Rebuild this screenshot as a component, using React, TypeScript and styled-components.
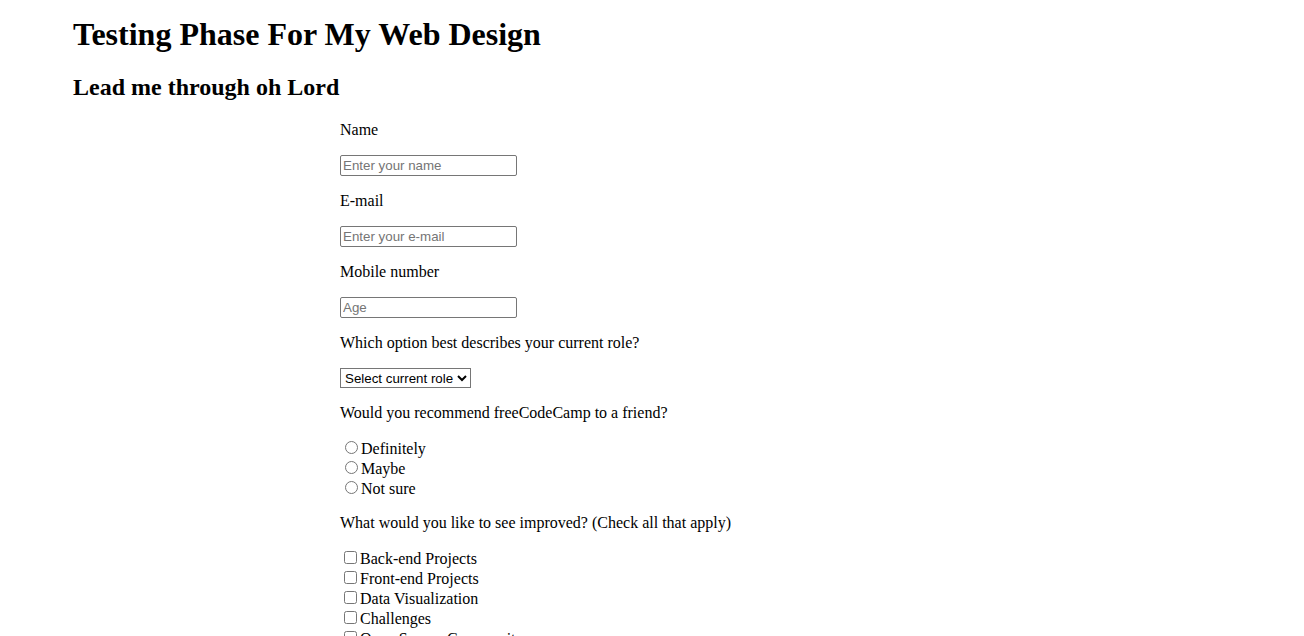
import React from "react";
import styled, { createGlobalStyle } from "styled-components";

const Global = createGlobalStyle`
  html, body { margin: 0; padding: 0; background: #fff; }
  body { font-family: "Liberation Serif", "Times New Roman", serif; color: #000; }
`;

const Page = styled.div`
  padding: 16px 0 0 73px;
`;

const Title = styled.h1`
  font-size: 32px;
  font-weight: bold;
  margin: 0 0 21.44px;
`;

const Subtitle = styled.h2`
  font-size: 24px;
  font-weight: bold;
  margin: 19.92px 0;
`;

const Form = styled.form`
  margin-left: 267px;
`;

const Question = styled.p`
  font-size: 16px;
  margin: 16px 0;
`;

const Field = styled.p`
  margin: 16px 0;
  line-height: 0;
`;

const TextInput = styled.input`
  font-family: "Liberation Sans", Arial, sans-serif;
  font-size: 13.333px;
  width: 177px;
  height: 21px;
  box-sizing: border-box;
  padding: 1px 2px;
  border: 1px solid #767676;
  border-radius: 2px;
  &::placeholder { color: #757575; }
`;

const Select = styled.select`
  font-family: "Liberation Sans", Arial, sans-serif;
  font-size: 13.333px;
  color: #000;
  height: 20px;
  border: 1px solid #767676;
  border-radius: 0;
  background: #fff;
  padding: 0;
`;

const OptionList = styled.div`
  margin: 16px 0;
  font-size: 16px;
`;

const OptionRow = styled.label`
  display: block;
`;

const Radio = styled.input.attrs({ type: "radio" })`
  margin: 3px 3px 0 5px;
`;

const Check = styled.input.attrs({ type: "checkbox" })`
  margin: 3px 3px 3px 4px;
`;

const radios = ["Definitely", "Maybe", "Not sure"];
const checks = [
  "Back-end Projects",
  "Front-end Projects",
  "Data Visualization",
  "Challenges",
  "Open Source Community",
  "Gitter help rooms",
  "Videos",
  "City Meetups",
  "Wiki",
  "Forum",
  "Additional Courses",
];

export default function App() {
  return (
    <>
      <Global />
      <Page>
        <Title>Testing Phase For My Web Design</Title>
        <Subtitle>Lead me through oh Lord</Subtitle>
        <Form onSubmit={(e) => e.preventDefault()}>
          <Question>Name</Question>
          <Field>
            <TextInput type="text" placeholder="Enter your name" />
          </Field>
          <Question>E-mail</Question>
          <Field>
            <TextInput type="email" placeholder="Enter your e-mail" />
          </Field>
          <Question>Mobile number</Question>
          <Field>
            <TextInput type="text" placeholder="Age" />
          </Field>
          <Question>Which option best describes your current role?</Question>
          <Field>
            <Select defaultValue="">
              <option value="" disabled>
                Select current role
              </option>
              <option>Student</option>
              <option>Full Time Job</option>
              <option>Full Time Learner</option>
              <option>Prefer not to say</option>
              <option>Other</option>
            </Select>
          </Field>
          <Question>Would you recommend freeCodeCamp to a friend?</Question>
          <OptionList>
            {radios.map((r) => (
              <OptionRow key={r}>
                <Radio name="recommend" value={r} />
                {r}
              </OptionRow>
            ))}
          </OptionList>
          <Question>What would you like to see improved? (Check all that apply)</Question>
          <OptionList>
            {checks.map((c) => (
              <OptionRow key={c}>
                <Check value={c} />
                {c}
              </OptionRow>
            ))}
          </OptionList>
        </Form>
      </Page>
    </>
  );
}
